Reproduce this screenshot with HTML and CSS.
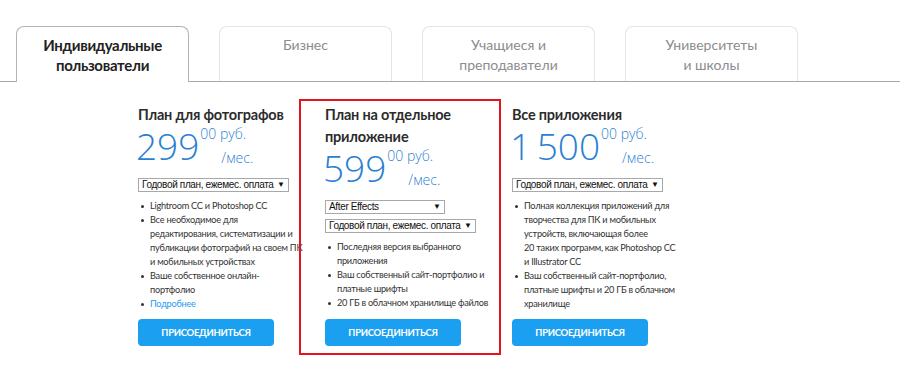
FILE: index.html
```html
<!DOCTYPE html>
<html lang="ru">
<head>
<meta charset="utf-8">
<title>Планы</title>
<link rel="stylesheet" href="styles.css">
</head>
<body>
<nav class="tabs">
  <div class="tab active">Индивидуальные<br>пользователи</div>
  <div class="tab">Бизнес</div>
  <div class="tab">Учащиеся и<br>преподаватели</div>
  <div class="tab">Университеты<br>и школы</div>
</nav>
<main class="plans">
  <section class="plan plan-photo">
    <h2 class="title">План для фотографов</h2>
    <div class="price">
      <span class="amount">299</span>
      <span class="unit"><span class="cents">00 руб.</span><span class="per">/мес.</span></span>
    </div>
    <div class="select w150"><span class="val">Годовой план, ежемес. оплата</span><span class="arrow">▼</span></div>
    <ul class="features">
      <li><span>Lightroom CC и Photoshop CC</span></li>
      <li><span>Все необходимое для<br>редактирования, систематизации и<br>публикации фотографий на своем ПК<br>и мобильных устройствах</span></li>
      <li><span>Ваше собственное онлайн-<br>портфолио</span></li>
      <li><span><a href="#" class="more">Подробнее</a></span></li>
    </ul>
    <button class="join">ПРИСОЕДИНИТЬСЯ</button>
  </section>
  <section class="plan plan-app">
    <h2 class="title">План на отдельное<br>приложение</h2>
    <div class="price">
      <span class="amount">599</span>
      <span class="unit"><span class="cents">00 руб.</span><span class="per">/мес.</span></span>
    </div>
    <div class="select w119"><span class="val">After Effects</span><span class="arrow">▼</span></div>
    <div class="select w150 second"><span class="val">Годовой план, ежемес. оплата</span><span class="arrow">▼</span></div>
    <ul class="features">
      <li><span>Последняя версия выбранного<br>приложения</span></li>
      <li><span>Ваш собственный сайт-портфолио и<br>платные шрифты</span></li>
      <li><span>20 ГБ в облачном хранилище файлов</span></li>
    </ul>
    <button class="join">ПРИСОЕДИНИТЬСЯ</button>
  </section>
  <section class="plan plan-all">
    <h2 class="title">Все приложения</h2>
    <div class="price">
      <span class="amount">1 500</span>
      <span class="unit"><span class="cents">00 руб.</span><span class="per">/мес.</span></span>
    </div>
    <div class="select w150"><span class="val">Годовой план, ежемес. оплата</span><span class="arrow">▼</span></div>
    <ul class="features">
      <li><span>Полная коллекция приложений для<br>творчества для ПК и мобильных<br>устройств, включающая более<br>20 таких программ, как Photoshop CC<br>и Illustrator CC</span></li>
      <li><span>Ваш собственный сайт-портфолио,<br>платные шрифты и 20 ГБ в облачном<br>хранилище</span></li>
    </ul>
    <button class="join">ПРИСОЕДИНИТЬСЯ</button>
  </section>
</main>
</body>
</html>
```
FILE: styles.css
```css
* { box-sizing: border-box; }
body {
  margin: 0;
  background: #fff;
  font-family: Lato, "Open Sans", sans-serif;
  color: #2c2c2c;
}
.tabs {
  display: flex;
  gap: 30px;
  height: 82px;
  padding: 26px 0 0 16px;
  border-bottom: 1px solid #a9a9a9;
}
.tab {
  width: 173px;
  height: 55px;
  border: 1px solid #e4e4e4;
  border-bottom: none;
  border-radius: 8px 8px 0 0;
  text-align: center;
  padding-top: 8px;
  font-size: 14px;
  line-height: 20px;
  color: #8c8c8c;
  background: #fff;
}
.tab.active {
  height: 56px;
  margin-bottom: -1px;
  border-color: #b3b3b3;
  color: #222;
  font-weight: 700;
  font-size: 15px;
  letter-spacing: -0.3px;
}
.plans {
  display: flex;
  padding: 17px 0 0 138px;
}
.plan {
  display: flex;
  flex-direction: column;
  align-items: flex-start;
  padding: 5px 0 9px 0;
}
.plan-photo { width: 161px; }
.plan-app {
  width: 202px;
  border: 2px solid #e3141c;
  padding: 3px 0 7px 24px;
}
.plan-all {
  width: 180px;
  margin-left: 11px;
}
.title {
  margin: 0;
  font-size: 14.5px;
  font-weight: 700;
  line-height: 22px;
  letter-spacing: -0.2px;
  color: #2c2c2c;
  white-space: nowrap;
}
.price {
  display: flex;
  align-items: flex-start;
  color: #2b7fd2;
  font-family: "Open Sans", sans-serif;
  font-weight: 300;
  margin-top: 1px;
}
.amount {
  font-size: 37px;
  line-height: 37px;
  margin-left: -2px;
  word-spacing: -4px;
}
.unit {
  display: flex;
  flex-direction: column;
  margin-left: 1px;
  font-size: 14px;
  line-height: 14px;
}
.per {
  margin-top: 10px;
  padding-left: 21px;
}
.select {
  display: flex;
  justify-content: space-between;
  align-items: center;
  height: 14px;
  margin-top: 13px;
  padding: 0 3px 0 3px;
  border: 1px solid #a8a8a8;
  font-family: "Liberation Sans", Arial, sans-serif;
  font-size: 10px;
  line-height: 12px;
  letter-spacing: -0.35px;
  color: #111;
  background: #fff;
  white-space: nowrap;
}
.select.second { margin-top: 5px; }
.w150 { width: 151px; }
.w119 { width: 120px; }
.arrow {
  flex: none;
  font-size: 8px;
  letter-spacing: 0;
  margin-left: 2px;
}
.features {
  list-style: none;
  margin: 7px 0 0 0;
  padding: 0;
  font-size: 9.2px;
  line-height: 14px;
  letter-spacing: -0.25px;
  color: #333;
}
.features li {
  display: flex;
  white-space: nowrap;
}
.features li::before {
  content: "";
  flex: none;
  width: 3px;
  height: 3px;
  border-radius: 50%;
  background: #333;
  margin: 6px 6px 0 3px;
}
.more {
  color: #1e9cf0;
  text-decoration: none;
}
.join {
  margin-top: auto;
  width: 136px;
  height: 27px;
  border: none;
  border-radius: 4px;
  background: #1b9ff1;
  color: #fff;
  font-family: Lato, "Open Sans", sans-serif;
  font-weight: 700;
  font-size: 9.5px;
  letter-spacing: -0.3px;
  cursor: pointer;
}
.plan-app .join { margin-top: 9px; }
```
